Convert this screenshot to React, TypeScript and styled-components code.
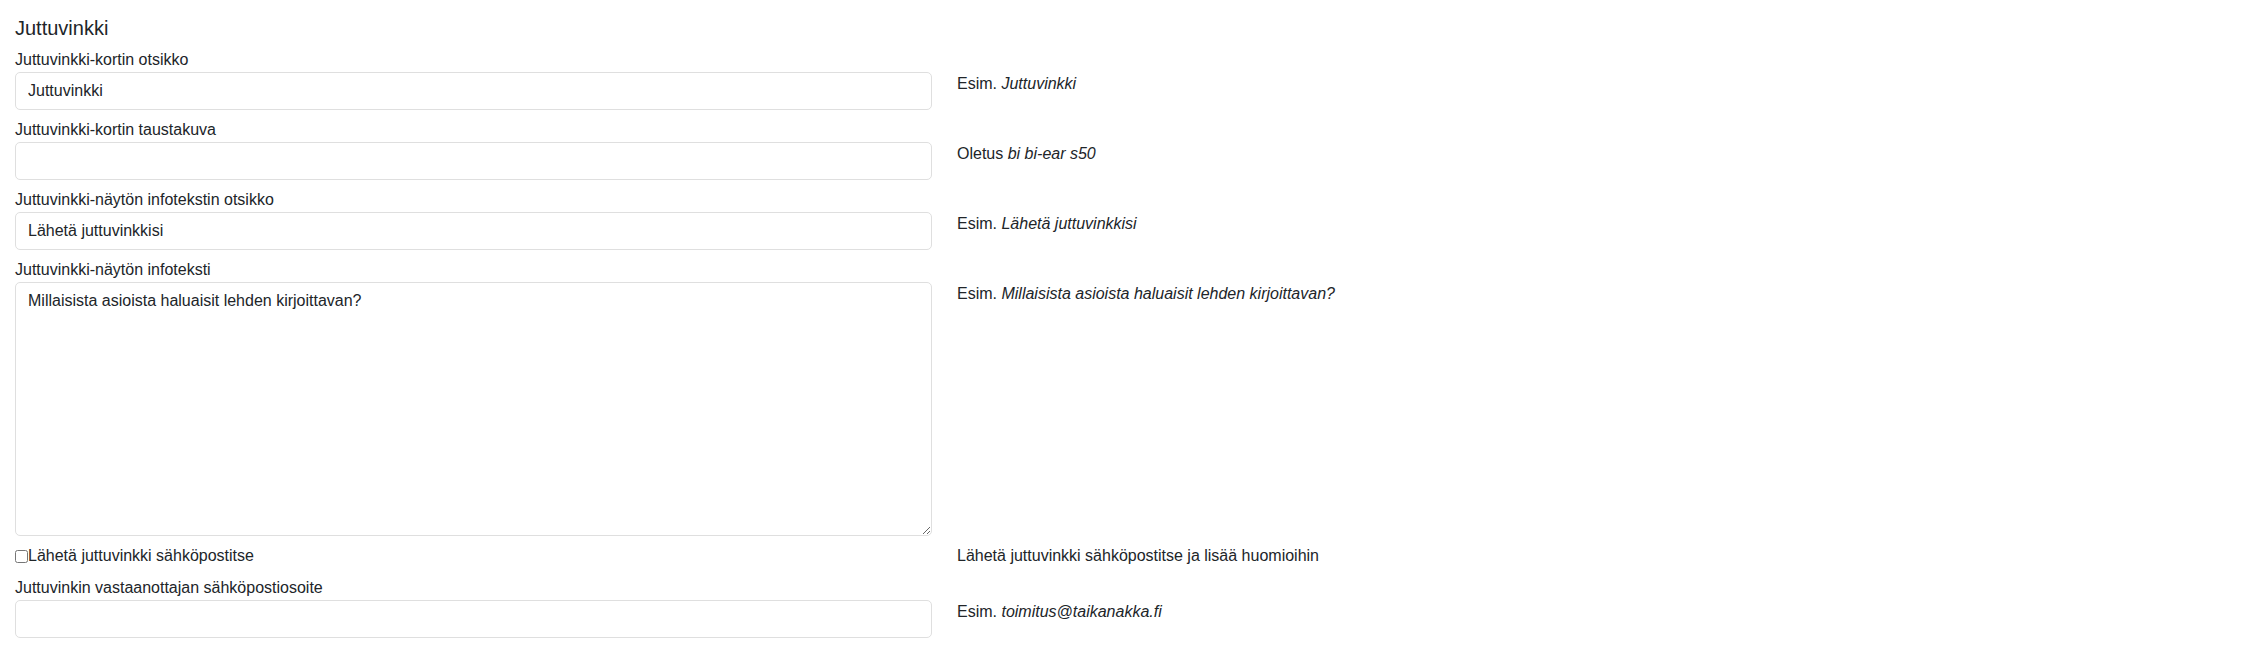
import React from "react";
import styled, { createGlobalStyle } from "styled-components";

const GlobalStyle = createGlobalStyle`
  html, body {
    margin: 0;
    padding: 0;
    background: #fff;
  }
  body {
    font-family: "Liberation Sans", Arial, sans-serif;
    font-size: 16px;
    line-height: 1.5;
    color: #212529;
  }
  *, *::before, *::after {
    box-sizing: border-box;
  }
`;

const Page = styled.div`
  padding: 16px 15px 0 15px;
`;

const Title = styled.h5`
  margin: 0 0 7.5px 0;
  font-size: 20px;
  font-weight: 400;
  line-height: 1.2;
`;

const FormRow = styled.div`
  display: grid;
  grid-template-columns: 917px 1fr;
  column-gap: 25px;
  margin-bottom: 8px;
`;

const Label = styled.label`
  grid-column: 1;
  display: block;
`;

const Input = styled.input`
  grid-column: 1;
  display: block;
  width: 100%;
  height: 38px;
  margin: 0;
  padding: 6px 12px;
  font: inherit;
  color: #212529;
  background: #fff;
  border: 1px solid #dfdfdf;
  border-radius: 5px;
  outline: none;
`;

const TextArea = styled.textarea<{ $rows: number }>`
  grid-column: 1;
  display: block;
  width: 100%;
  height: calc(${(p) => p.$rows} * 24px + 14px);
  margin: 0;
  padding: 6px 12px;
  font: inherit;
  color: #212529;
  background: #fff;
  border: 1px solid #dfdfdf;
  border-radius: 5px;
  resize: vertical;
  outline: none;
`;

const Help = styled.div`
  grid-column: 2;
  em {
    font-style: italic;
  }
`;

const CheckLabel = styled.label`
  grid-column: 1;
  display: flex;
  align-items: center;
`;

const Check = styled.input`
  width: 13px;
  height: 13px;
  margin: 1px 0 0 0;
`;

interface FieldProps {
  label: string;
  value?: string;
  prefix: string;
  hint: string;
  rows?: number;
}

const Field = ({ label, value = "", prefix, hint, rows }: FieldProps) => (
  <FormRow>
    <Label>{label}</Label>
    {rows ? (
      <TextArea $rows={rows} defaultValue={value} />
    ) : (
      <Input type="text" defaultValue={value} />
    )}
    <Help>
      {prefix} <em>{hint}</em>
    </Help>
  </FormRow>
);

export default function App() {
  return (
    <Page>
      <GlobalStyle />
      <Title>Juttuvinkki</Title>
      <Field
        label="Juttuvinkki-kortin otsikko"
        value="Juttuvinkki"
        prefix="Esim."
        hint="Juttuvinkki"
      />
      <Field
        label="Juttuvinkki-kortin taustakuva"
        prefix="Oletus"
        hint="bi bi-ear s50"
      />
      <Field
        label="Juttuvinkki-näytön infotekstin otsikko"
        value="Lähetä juttuvinkkisi"
        prefix="Esim."
        hint="Lähetä juttuvinkkisi"
      />
      <Field
        label="Juttuvinkki-näytön infoteksti"
        value="Millaisista asioista haluaisit lehden kirjoittavan?"
        prefix="Esim."
        hint="Millaisista asioista haluaisit lehden kirjoittavan?"
        rows={10}
      />
      <FormRow>
        <CheckLabel>
          <Check type="checkbox" />
          Lähetä juttuvinkki sähköpostitse
        </CheckLabel>
        <Help>Lähetä juttuvinkki sähköpostitse ja lisää huomioihin</Help>
      </FormRow>
      <Field
        label="Juttuvinkin vastaanottajan sähköpostiosoite"
        prefix="Esim."
        hint="toimitus@taikanakka.fi"
      />
    </Page>
  );
}
